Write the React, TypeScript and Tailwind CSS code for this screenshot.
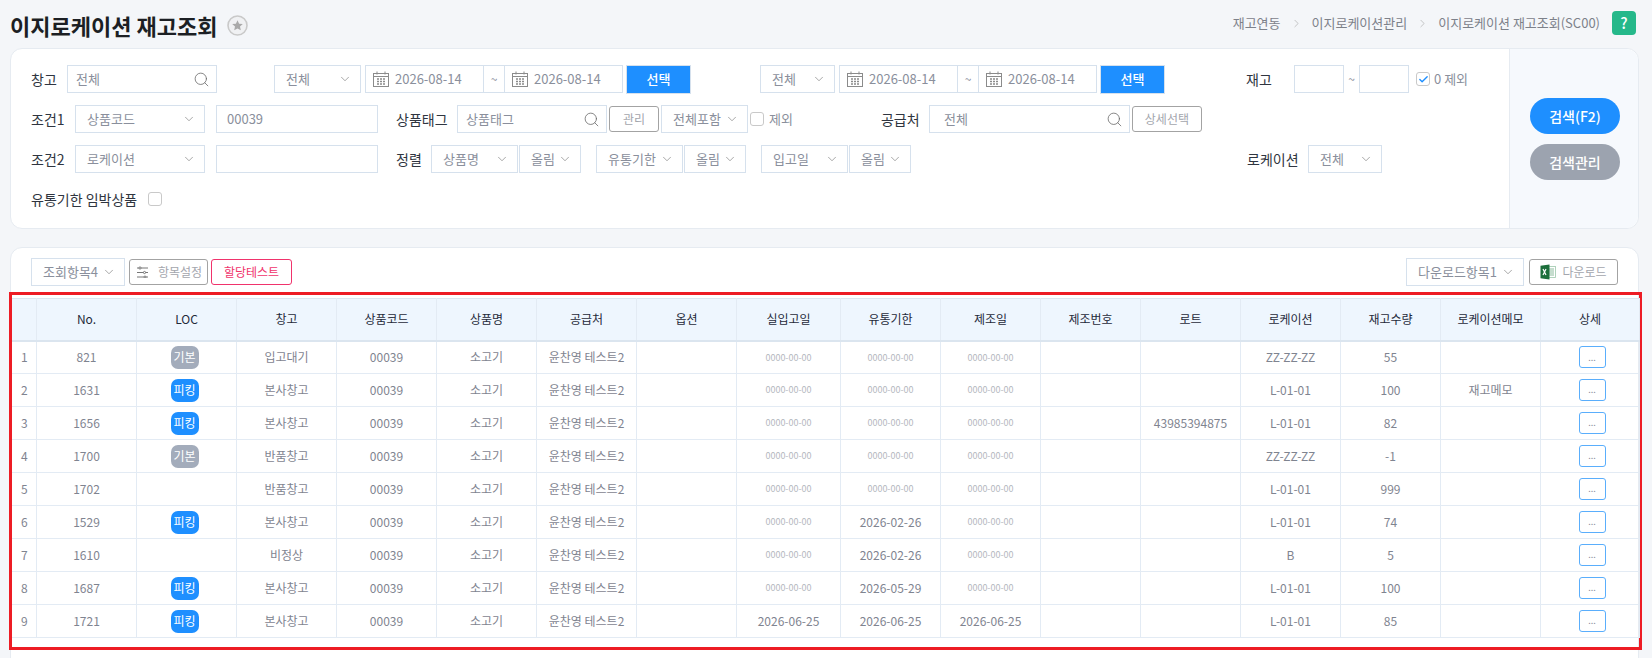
import React from "react";
import { ChevronDown, ChevronRight, Check, Search } from "lucide-react";

type Row = {
  no: number;
  loc: "기본" | "피킹" | "";
  wh: string;
  inDate: string;
  expiry: string;
  made: string;
  lot: string;
  location: string;
  qty: number;
  memo: string;
};

const ZERO = "0000-00-00";

const rows: Row[] = [
  { no: 821, loc: "기본", wh: "입고대기", inDate: ZERO, expiry: ZERO, made: ZERO, lot: "", location: "ZZ-ZZ-ZZ", qty: 55, memo: "" },
  { no: 1631, loc: "피킹", wh: "본사창고", inDate: ZERO, expiry: ZERO, made: ZERO, lot: "", location: "L-01-01", qty: 100, memo: "재고메모" },
  { no: 1656, loc: "피킹", wh: "본사창고", inDate: ZERO, expiry: ZERO, made: ZERO, lot: "43985394875", location: "L-01-01", qty: 82, memo: "" },
  { no: 1700, loc: "기본", wh: "반품창고", inDate: ZERO, expiry: ZERO, made: ZERO, lot: "", location: "ZZ-ZZ-ZZ", qty: -1, memo: "" },
  { no: 1702, loc: "", wh: "반품창고", inDate: ZERO, expiry: ZERO, made: ZERO, lot: "", location: "L-01-01", qty: 999, memo: "" },
  { no: 1529, loc: "피킹", wh: "본사창고", inDate: ZERO, expiry: "2026-02-26", made: ZERO, lot: "", location: "L-01-01", qty: 74, memo: "" },
  { no: 1610, loc: "", wh: "비정상", inDate: ZERO, expiry: "2026-02-26", made: ZERO, lot: "", location: "B", qty: 5, memo: "" },
  { no: 1687, loc: "피킹", wh: "본사창고", inDate: ZERO, expiry: "2026-05-29", made: ZERO, lot: "", location: "L-01-01", qty: 100, memo: "" },
  { no: 1721, loc: "피킹", wh: "본사창고", inDate: "2026-06-25", expiry: "2026-06-25", made: "2026-06-25", lot: "", location: "L-01-01", qty: 85, memo: "" },
];

const headers = ["", "No.", "LOC", "창고", "상품코드", "상품명", "공급처", "옵션", "실입고일", "유통기한", "제조일", "제조번호", "로트", "로케이션", "재고수량", "로케이션메모", "상세"];

const colWidths = ["w-[24px]", "w-[100px]", "w-[100px]", "w-[100px]", "w-[100px]", "w-[100px]", "w-[100px]", "w-[100px]", "w-[104px]", "w-[100px]", "w-[100px]", "w-[100px]", "w-[100px]", "w-[100px]", "w-[100px]", "w-[100px]", "w-[99px]"];

const Select = ({ label, className = "" }: { label: string; className?: string }) => (
  <div className={`flex h-[28px] shrink-0 items-center justify-between border border-[#d6e1ed] bg-white pl-[11px] pr-[8px] text-[13px] text-[#8a8f9c] ${className}`}>
    <span className="whitespace-nowrap">{label}</span>
    <ChevronDown size={14} strokeWidth={1.1} className="shrink-0 text-[#777]" />
  </div>
);

const TextBox = ({ value = "", className = "", icon = false, pad = "pl-[8px]" }: { value?: string; className?: string; icon?: boolean; pad?: string }) => (
  <div className={`flex h-[28px] shrink-0 items-center justify-between border border-[#d6e1ed] bg-white pr-[6px] text-[13px] text-[#8a8f9c] ${pad} ${className}`}>
    <span className="whitespace-nowrap">{value}</span>
    {icon && <Search size={17} strokeWidth={1.1} className="shrink-0 text-[#666]" />}
  </div>
);

const CalendarIcon = () => (
  <svg width="16" height="16" viewBox="0 0 16 16" fill="none" stroke="#8b8b8b" strokeWidth="1" className="shrink-0">
    <rect x="0.5" y="2.5" width="15" height="13" />
    <path d="M4 0.5v3M12 0.5v3M0.5 5.5h15" />
    <path d="M4 8h2M7 8h2M10 8h2M4 10.5h2M7 10.5h2M10 10.5h2M4 13h2M7 13h2M10 13h2" strokeWidth="1.3" />
  </svg>
);

const DateBox = () => (
  <div className="flex h-[28px] w-[119px] shrink-0 items-center gap-[6px] border border-[#d6e1ed] bg-white pl-[7px] text-[13px] text-[#8a8f9c]">
    <CalendarIcon />
    <span>2026-08-14</span>
  </div>
);

const DateRange = () => (
  <div className="flex shrink-0">
    <DateBox />
    <div className="flex h-[28px] w-[20px] items-center justify-center border-y border-[#d6e1ed] text-[12px] text-[#8a8f9c]">~</div>
    <DateBox />
  </div>
);

const BlueButton = ({ className = "" }: { className?: string }) => (
  <button className={`h-[29px] w-[65px] shrink-0 border border-[#d6e1ed] bg-[#1e8fff] text-[13px] font-medium text-white ${className}`}>선택</button>
);

const GrayButton = ({ label, className = "" }: { label: string; className?: string }) => (
  <button className={`h-[26px] shrink-0 rounded-[3px] border border-[#a3a3a3] bg-white text-[12px] text-[#a3a6ad] ${className}`}>{label}</button>
);

const Box = ({ className = "" }: { className?: string }) => (
  <span className={`block h-[14px] w-[14px] shrink-0 rounded-[3px] border border-[#c9c9c9] bg-white ${className}`} />
);

const Label = ({ text, className = "" }: { text: string; className?: string }) => (
  <span className={`shrink-0 whitespace-nowrap text-[14px] text-[#2f3540] ${className}`}>{text}</span>
);

const SliderIcon = () => (
  <svg width="11" height="12" viewBox="0 0 11 12" fill="none" stroke="#777" strokeWidth="1" className="shrink-0">
    <path d="M0 2h11M0 6.5h11M0 11h11" />
    <circle cx="3" cy="2" r="1.1" fill="#fff" />
    <circle cx="7.5" cy="6.5" r="1.1" fill="#fff" />
    <circle cx="8" cy="11" r="1" fill="#fff" />
  </svg>
);

const ExcelIcon = () => (
  <svg width="16" height="16" viewBox="0 0 16 16" className="shrink-0">
    <rect x="7" y="2.5" width="8.5" height="11" fill="#fff" stroke="#9cc7ab" strokeWidth="0.8" />
    <path d="M9 5h5M9 7h5M9 9h5M9 11h5" stroke="#7fb392" strokeWidth="0.9" />
    <path d="M0.5 1.8 9.5 0.5v15l-9-1.3z" fill="#1d6f3c" />
    <path d="M3 5l3 6M6 5l-3 6" stroke="#fff" strokeWidth="1.2" />
  </svg>
);

const StarIcon = () => (
  <svg width="21" height="21" viewBox="0 0 21 21" className="shrink-0">
    <circle cx="10.5" cy="10.5" r="9.5" fill="#f0f1f3" stroke="#c9c9c9" strokeWidth="1.6" />
    <path d="M10.5 5.2l1.6 3.5 3.7.4-2.8 2.5.8 3.7-3.3-1.9-3.3 1.9.8-3.7-2.8-2.5 3.7-.4z" fill="#a9a9a9" />
  </svg>
);

const Crumb = () => <ChevronRight size={13} strokeWidth={1} className="mx-[9px] text-[#9a9a9a]" />;

const SearchCard = () => (
  <div className="flex h-[181px] rounded-[12px] border border-[#e6ebf1] bg-white">
    <div className="flex-1 pl-[20px] pt-[16px]">
      <div className="flex h-[28px] items-center">
        <Label text="창고" className="w-[36px]" />
        <TextBox value="전체" icon className="w-[150px]" />
        <Select label="전체" className="ml-[57px] w-[87px]" />
        <div className="ml-[4px] flex">
          <DateRange />
        </div>
        <BlueButton className="ml-[3px]" />
        <Select label="전체" className="ml-[69px] w-[75px]" />
        <div className="ml-[4px] flex">
          <DateRange />
        </div>
        <BlueButton className="ml-[3px]" />
        <Label text="재고" className="ml-[81px] w-[48px]" />
        <TextBox className="w-[50px]" />
        <span className="w-[15px] text-center text-[12px] text-[#8a8f9c]">~</span>
        <TextBox className="w-[50px]" />
        <span className="ml-[7px] flex h-[14px] w-[14px] items-center justify-center rounded-[3px] border border-[#c9c9c9]">
          <Check size={11} strokeWidth={3} className="text-[#1e8fff]" />
        </span>
        <span className="ml-[4px] whitespace-nowrap text-[13px] text-[#8a8f9c]">0 제외</span>
      </div>

      <div className="mt-[12px] flex h-[28px] items-center">
        <Label text="조건1" className="w-[44px]" />
        <Select label="상품코드" className="w-[130px]" />
        <TextBox value="00039" className="ml-[11px] w-[162px] pl-[10px]" />
        <Label text="상품태그" className="ml-[18px] w-[61px]" />
        <TextBox value="상품태그" icon className="w-[150px]" />
        <GrayButton label="관리" className="ml-[2px] w-[50px]" />
        <Select label="전체포함" className="ml-[2px] w-[87px]" />
        <Box className="ml-[2px]" />
        <span className="ml-[5px] whitespace-nowrap text-[13px] text-[#8a8f9c]">제외</span>
        <Label text="공급처" className="ml-[88px] w-[48px]" />
        <TextBox value="전체" icon className="w-[201px]" pad="pl-[14px]" />
        <GrayButton label="상세선택" className="ml-[2px] w-[70px]" />
      </div>

      <div className="mt-[12px] flex h-[28px] items-center">
        <Label text="조건2" className="w-[44px]" />
        <Select label="로케이션" className="w-[130px]" />
        <TextBox className="ml-[11px] w-[162px]" />
        <Label text="정렬" className="ml-[18px] w-[35px]" />
        <Select label="상품명" className="w-[87px]" />
        <Select label="올림" className="ml-[1px] w-[62px]" />
        <Select label="유통기한" className="ml-[15px] w-[87px]" />
        <Select label="올림" className="ml-[1px] w-[62px]" />
        <Select label="입고일" className="ml-[15px] w-[87px]" />
        <Select label="올림" className="ml-[1px] w-[62px]" />
        <Label text="로케이션" className="ml-[336px] w-[61px]" />
        <Select label="전체" className="w-[74px]" />
      </div>

      <div className="mt-[12px] flex h-[28px] items-center">
        <Label text="유통기한 임박상품" />
        <Box className="ml-[11px]" />
      </div>
    </div>

    <div className="flex w-[129px] flex-col gap-[10px] rounded-r-[12px] border-l border-[#e6ebf1] bg-[#f6f9fd] pl-[20px] pt-[49px]">
      <button className="h-[36px] w-[90px] rounded-full bg-[#1e8fff] text-[14px] font-medium text-white">검색(F2)</button>
      <button className="h-[36px] w-[90px] rounded-full bg-[#9ca3af] text-[14px] font-medium text-white">검색관리</button>
    </div>
  </div>
);

const Badge = ({ type }: { type: Row["loc"] }) => {
  if (!type) return null;
  return (
    <span className={`ml-[33px] flex h-[23px] w-[28px] items-center justify-center rounded-[7px] text-[12px] text-white ${type === "피킹" ? "bg-[#1e8fff]" : "bg-[#a3acbb]"}`}>
      {type}
    </span>
  );
};

const Cell = ({ children, className = "" }: { children?: React.ReactNode; className?: string }) => (
  <td className={`h-[33px] overflow-hidden whitespace-nowrap border-b border-r border-[#e3ebf4] py-0 pl-px pr-0 text-center align-middle ${className}`}>{children}</td>
);

const DateCell = ({ value }: { value: string }) => (
  <Cell className={value === ZERO ? "text-[9px] text-[#b5b8c0]" : ""}>{value}</Cell>
);

const StockTable = () => (
  <table className="w-[1627px] table-fixed border-collapse text-[12px] text-[#7f8490]">
    <colgroup>
      {colWidths.map((w, i) => (
        <col key={i} className={w} />
      ))}
    </colgroup>
    <thead>
      <tr>
        {headers.map((h, i) => (
          <th key={i} className="h-[42px] border-b-2 border-r border-t border-b-[#dbe5ef] border-r-[#e3ebf4] border-t-[#dbe5ef] bg-[#eef6fe] py-0 pl-px pr-0 text-center text-[12px] font-normal text-[#1f2a3a]">
            {h}
          </th>
        ))}
      </tr>
    </thead>
    <tbody>
      {rows.map((row, i) => (
        <tr key={row.no}>
          <Cell>{i + 1}</Cell>
          <Cell>{row.no}</Cell>
          <Cell>
            <Badge type={row.loc} />
          </Cell>
          <Cell>{row.wh}</Cell>
          <Cell>00039</Cell>
          <Cell>소고기</Cell>
          <Cell>윤찬영 테스트2</Cell>
          <Cell />
          <DateCell value={row.inDate} />
          <DateCell value={row.expiry} />
          <DateCell value={row.made} />
          <Cell />
          <Cell>{row.lot}</Cell>
          <Cell>{row.location}</Cell>
          <Cell>{row.qty}</Cell>
          <Cell>{row.memo}</Cell>
          <Cell>
            <button className="ml-[37px] flex h-[22px] w-[27px] items-center justify-center rounded-[3px] border border-[#5aaefc] bg-white text-[9px] text-[#8a8f9c]">...</button>
          </Cell>
        </tr>
      ))}
    </tbody>
  </table>
);

export default function App() {
  return (
    <div className="h-[658px] overflow-hidden bg-[#f4f6f9] pl-[10px] pr-[13px] font-['Noto_Sans_CJK_KR','Noto_Sans',sans-serif]">
      <div className="flex h-[48px] items-center justify-between">
        <div className="flex items-center gap-[10px] pt-[2px]">
          <h1 className="text-[22px] font-bold leading-none text-[#1c1f24]">이지로케이션 재고조회</h1>
          <StarIcon />
        </div>
        <div className="mr-[3px] flex items-center pb-[2px] text-[13px] text-[#7d818a]">
          <span>재고연동</span>
          <Crumb />
          <span>이지로케이션관리</span>
          <Crumb />
          <span>이지로케이션 재고조회(SC00)</span>
          <span className="ml-[12px] flex h-[24px] w-[24px] items-center justify-center rounded-[4px] bg-[#25b88a] text-[15px] font-medium text-white">?</span>
        </div>
      </div>

      <SearchCard />

      <div className="mt-[18px] h-[420px] rounded-t-[12px] border border-[#e6ebf1] bg-white">
        <div className="flex h-[44px] items-start justify-between pl-[20px] pr-[20px] pt-[10px]">
          <div className="flex items-center">
            <Select label="조회항목4" className="w-[94px]" />
            <button className="ml-[4px] flex h-[26px] w-[79px] items-center gap-[10px] rounded-[3px] border border-[#a3a3a3] bg-white pl-[7px] text-[12px] text-[#a3a6ad]">
              <SliderIcon />
              항목설정
            </button>
            <button className="ml-[3px] h-[26px] w-[81px] rounded-[3px] border border-[#f0336c] bg-white text-[12px] text-[#f0336c]">할당테스트</button>
          </div>
          <div className="flex items-center">
            <Select label="다운로드항목1" className="w-[118px]" />
            <button className="ml-[5px] flex h-[26px] w-[89px] items-center justify-center gap-[6px] rounded-[3px] border border-[#a3a3a3] bg-white text-[12px] text-[#a3a6ad]">
              <ExcelIcon />
              다운로드
            </button>
          </div>
        </div>

        <div className="-ml-[2px] -mr-[4px] h-[358px] border-[3px] border-[#ed1c24] pt-[3px]">
          <StockTable />
        </div>
      </div>
    </div>
  );
}
